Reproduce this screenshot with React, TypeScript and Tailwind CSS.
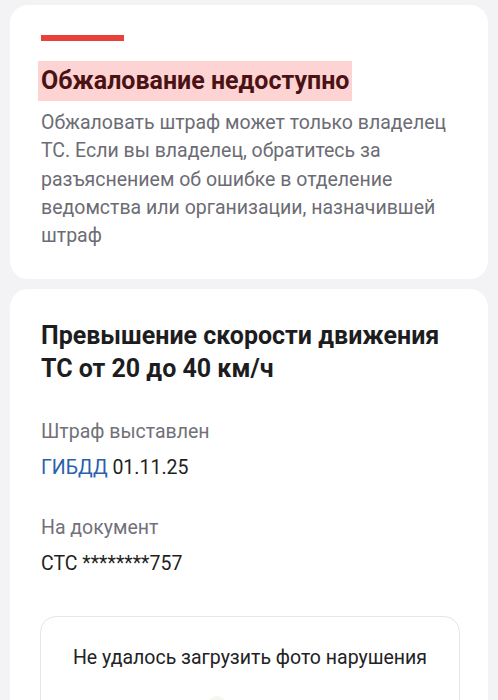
import React from "react";

const InfoRow = ({ label, children }: { label: string; children: React.ReactNode }) => (
  <div className="flex flex-col">
    <p className="text-[19.5px] leading-[28px] text-[#71717a]">{label}</p>
    <p className="mt-[8px] text-[19.5px] leading-[28px] text-[#1f1f22]">{children}</p>
  </div>
);

const App = () => {
  return (
    <div
      className="h-[700px] overflow-hidden bg-[#f3f3f5] px-[10px] pt-[5px]"
      style={{ fontFamily: "Roboto, 'Noto Sans', sans-serif" }}
    >
      <div className="rounded-[18px] bg-white pt-[30px] pb-[29px] pl-[31px] pr-[24px]">
        <div className="h-[6px] w-[83px] bg-[#e8413a]" />
        <div className="mt-[20px]">
          <span className="-ml-[3px] inline-block bg-[#fdd3d4] px-[3px] text-[25px] font-bold leading-[40px] text-[#4a1212]">
            Обжалование недоступно
          </span>
        </div>
        <p className="mt-[8px] text-[19.5px] leading-[28.3px] text-[#6c6c74]">
          Обжаловать штраф может только владелец ТС. Если вы владелец, обратитесь за разъяснением об ошибке в
          отделение ведомства или организации, назначившей штраф
        </p>
      </div>

      <div className="mt-[10px] rounded-[18px] bg-white pt-[30px] pl-[31px] pr-[28px] pb-[30px]">
        <h2 className="text-[25px] font-bold leading-[33px] text-[#1d1d1f]">
          Превышение скорости движения ТС от 20 до 40 км/ч
        </h2>
        <div className="mt-[33px] flex flex-col gap-[32px]">
          <InfoRow label="Штраф выставлен">
            <span className="text-[#2a5fae]">ГИБДД</span> 01.11.25
          </InfoRow>
          <InfoRow label="На документ">СТС ********757</InfoRow>
        </div>
        <div className="mt-[38px] -ml-[1px] rounded-[16px] border border-[#e6e6e9] px-4 pt-[27px] pb-6 flex flex-col items-center">
          <p className="text-[19.5px] leading-[28px] text-[#222225]">Не удалось загрузить фото нарушения</p>
          <div className="mt-[24px] mr-[50px] flex items-center gap-[4px]">
            <div className="h-[24px] w-[18px] rounded-full bg-[#f7f6ee]" />
            <div className="h-[10px] w-[12px] rounded-sm bg-[#f6f7f9]" />
          </div>
        </div>
      </div>
    </div>
  );
};

export default App;
